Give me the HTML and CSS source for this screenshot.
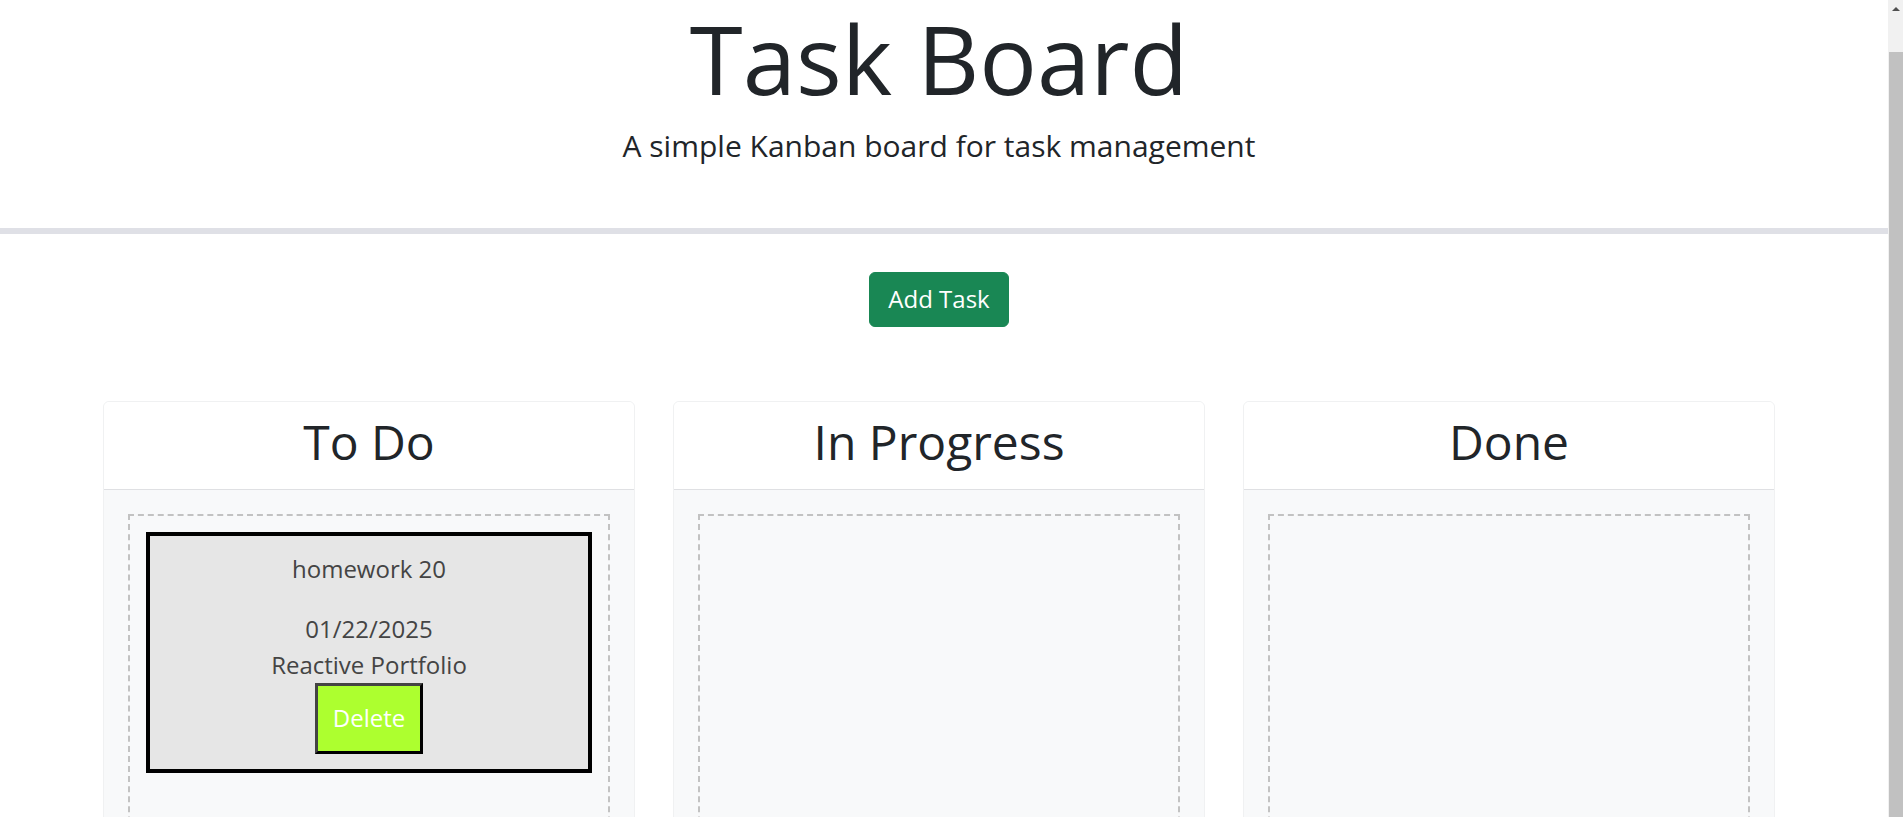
FILE: index.html
```html
<!DOCTYPE html>
<html lang="en">
<head>
<meta charset="utf-8">
<title>Task Board</title>
<link rel="stylesheet" href="styles.css">
</head>
<body>
<div class="viewport">
  <div class="page">
    <header class="hero">
      <h1 class="hero-title">Task Board</h1>
      <p class="hero-lead">A simple Kanban board for task management</p>
    </header>
    <div class="actions">
      <button class="btn-add" type="button">Add Task</button>
    </div>
    <main class="board">
      <section class="lane">
        <div class="lane-header"><h2 class="lane-title">To Do</h2></div>
        <div class="lane-body">
          <div class="dropzone">
            <div class="task">
              <div class="task-title">homework 20</div>
              <p class="task-text">01/22/2025</p>
              <p class="task-text">Reactive Portfolio</p>
              <button class="btn-delete" type="button">Delete</button>
            </div>
          </div>
        </div>
      </section>
      <section class="lane">
        <div class="lane-header"><h2 class="lane-title">In Progress</h2></div>
        <div class="lane-body"><div class="dropzone"></div></div>
      </section>
      <section class="lane">
        <div class="lane-header"><h2 class="lane-title">Done</h2></div>
        <div class="lane-body"><div class="dropzone"></div></div>
      </section>
    </main>
  </div>
  <div class="scrollbar">
    <div class="scroll-arrow"></div>
    <div class="scroll-track"><div class="scroll-thumb"></div></div>
  </div>
</div>
</body>
</html>
```
FILE: styles.css
```css
* { box-sizing: border-box; }
html, body { margin: 0; padding: 0; }
body {
  font-family: "Open Sans", "Noto Sans", sans-serif;
  color: #212529;
  background: #fff;
}
.viewport {
  display: flex;
  height: 817px;
  overflow: hidden;
}
.page {
  flex: 1;
  min-width: 0;
}
.hero {
  text-align: center;
  padding: 0 10px 60px 0;
  border-bottom: 6px solid #dfe0e6;
}
.hero-title {
  margin: 0 0 7.6px;
  font-size: 96px;
  font-weight: 400;
  line-height: 1.2;
}
.hero-lead {
  margin: 0;
  font-size: 30px;
  line-height: 45px;
}
.actions {
  display: flex;
  justify-content: center;
  padding: 38px 10px 74px 0;
}
.btn-add {
  font-family: inherit;
  font-size: 24px;
  line-height: 36px;
  color: #fff;
  background: #198754;
  border: 1px solid #198754;
  border-radius: 6px;
  padding: 8.5px 18.5px;
}
.board {
  display: grid;
  grid-template-columns: repeat(3, 532px);
  column-gap: 38px;
  padding-left: 103px;
}
.lane {
  border: 1px solid #f0f1f2;
  border-radius: 6px;
  background: #f8f9fa;
  height: 600px;
  overflow: hidden;
}
.lane-header {
  background: #fff;
  border-bottom: 1px solid #dfe0e3;
  padding: 11px 16px 0;
  text-align: center;
}
.lane-title {
  margin: 0;
  padding-bottom: 18.4px;
  font-size: 48px;
  font-weight: 400;
  line-height: 1.2;
}
.lane-body {
  padding: 24px;
}
.dropzone {
  border: 2px dashed #c2c2c2;
  padding: 16px;
  min-height: 500px;
}
.task {
  background: #e6e6e6;
  border: 4px solid #000;
  padding: 15px;
  text-align: center;
  color: #444;
  font-size: 24px;
  line-height: 36px;
}
.task-title {
  margin-bottom: 24px;
}
.task-text {
  margin: 0;
}
.btn-delete {
  font-family: inherit;
  font-size: 24px;
  line-height: 36px;
  color: #fff;
  background: #adff2f;
  border: 3px solid;
  border-color: #444 #000 #000 #444;
  padding: 14.5px 14.5px;
}
.scrollbar {
  width: 15px;
  flex: none;
  background: #f1f1f1;
  display: flex;
  flex-direction: column;
}
.scroll-arrow {
  height: 17px;
  display: flex;
  justify-content: center;
  align-items: center;
}
.scroll-arrow::before {
  content: "";
  border-left: 4px solid transparent;
  border-right: 4px solid transparent;
  border-bottom: 4px solid #505050;
}
.scroll-track {
  flex: 1;
  padding: 35px 0 0 1px;
}
.scroll-thumb {
  height: 100%;
  background: #c1c1c1;
}
```
